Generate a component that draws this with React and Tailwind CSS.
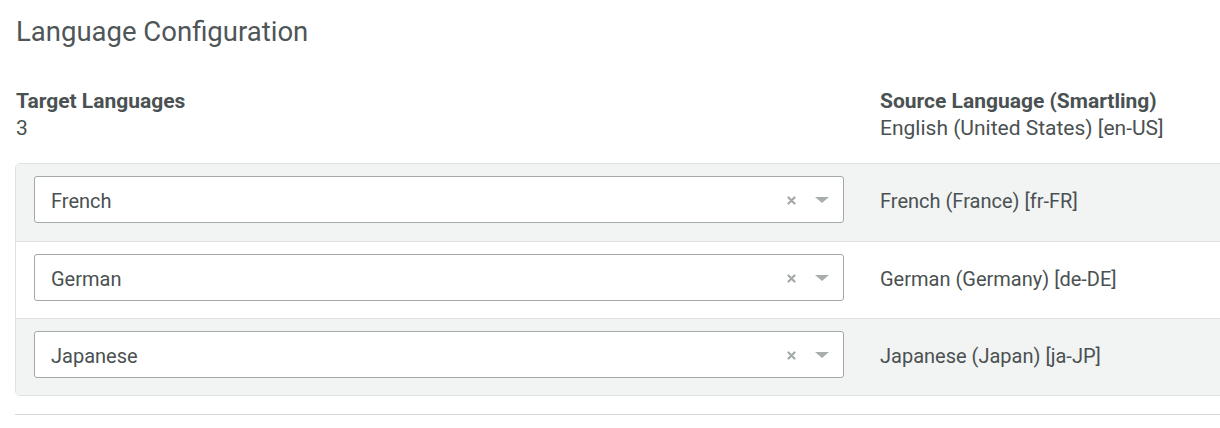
const rows = [
  { name: 'French', locale: 'French (France) [fr-FR]' },
  { name: 'German', locale: 'German (Germany) [de-DE]' },
  { name: 'Japanese', locale: 'Japanese (Japan) [ja-JP]' },
];

function Select({ value }) {
  return (
    <div className="flex items-center h-[47px] w-[810px] bg-white border border-[#a3a8a9] rounded-[3px] pl-4 pr-[14px]">
      <span className="flex-1 text-[20px] text-[#4a5152] pt-[3px]">{value}</span>
      {/* clear */}
      <svg width="9" height="9" viewBox="0 0 9 9" className="mr-[19px] mt-[2px]">
        <path d="M1.5 1.5 L7.5 7.5 M7.5 1.5 L1.5 7.5" stroke="#a3a8a9" strokeWidth="2.2" strokeLinecap="round" />
      </svg>
      {/* caret */}
      <span className="w-0 h-0 border-l-[7px] border-r-[7px] border-t-[6px] border-l-transparent border-r-transparent border-t-[#a8adae] mt-[1px]"></span>
    </div>
  );
}

export default function App() {
  return (
    <div className="w-[1220px] h-[428px] overflow-hidden bg-white text-[#4a5152]" style={{ fontFamily: 'Roboto, "Liberation Sans", sans-serif' }}>
      <div className="pl-4 pt-[14px]">
        <h1 className="text-[27.5px] leading-[36px] text-[#4f5657]">Language Configuration</h1>

        {/* Header */}
        <div className="flex mt-[38px]">
          <div className="w-[864px]">
            <div className="text-[21px] font-bold leading-[27px]">Target Languages</div>
            <div className="text-[21px] leading-[27px]">3</div>
          </div>
          <div>
            <div className="text-[21px] font-bold leading-[27px]">Source Language (Smartling)</div>
            <div className="text-[21px] leading-[27px]">English (United States) [en-US]</div>
          </div>
        </div>

        {/* Language rows */}
        <div className="mt-[21px] w-[1240px] border border-[#dfe2e3] rounded-[5px] overflow-hidden -ml-[1px]">
          {rows.map((row, i) => (
            <div
              key={row.name}
              className={`flex items-center h-[77px] pl-[18px] pb-[6px] ${i % 2 === 0 ? 'bg-[#f2f3f3]' : 'bg-white'} ${i > 0 ? 'border-t border-[#dfe2e3]' : ''}`}
            >
              <Select value={row.name} />
              <div className="ml-[36px] text-[20px] text-[#4a5152] pt-[3px]">{row.locale}</div>
            </div>
          ))}
        </div>

        <div className="mt-[18px] border-t border-[#d6d9da] w-[1220px] -ml-[1px]"></div>
      </div>
    </div>
  );
}
